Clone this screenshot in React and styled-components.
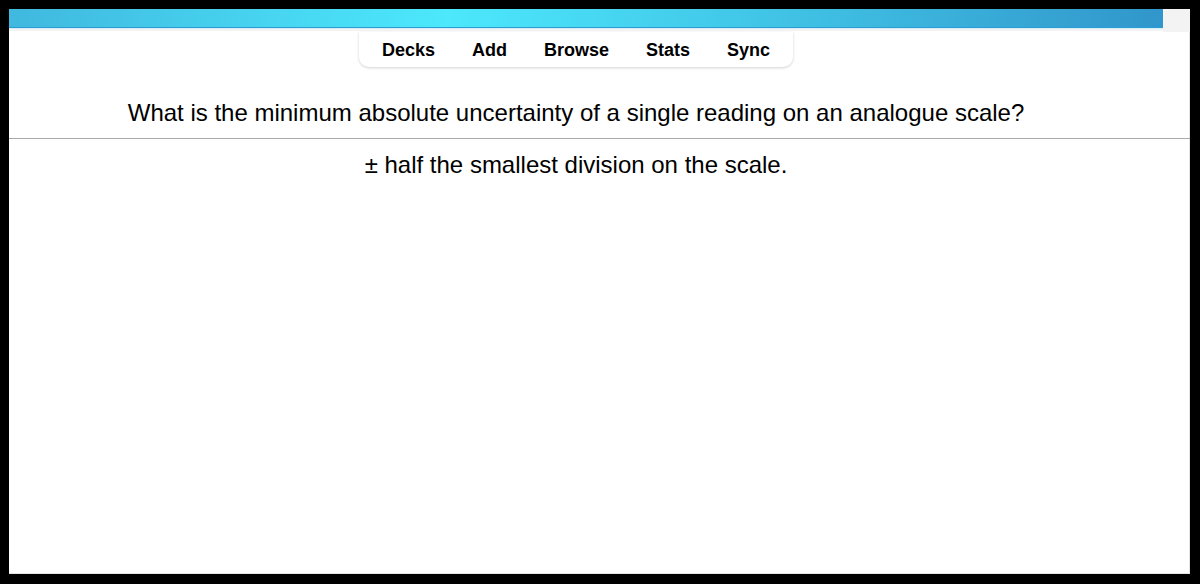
import React from "react";
import styled, { createGlobalStyle } from "styled-components";

const GlobalStyle = createGlobalStyle`
  html, body {
    margin: 0;
    padding: 0;
    background: #000;
  }
  body {
    font-family: "Liberation Sans", Arial, Helvetica, sans-serif;
  }
`;

const Frame = styled.div`
  box-sizing: border-box;
  height: 584px;
  padding: 9px 10px 10px 9px;
  background: #000;
`;

const Window = styled.div`
  height: 100%;
  background: #fff;
  display: flex;
  flex-direction: column;
  box-shadow: inset -1px -1px 0 #e4e4e4;
  overflow: hidden;
`;

// top coloured strip + the little grey corner next to it
const TopRow = styled.div`
  display: flex;
  align-items: flex-start;
`;

const ColorBar = styled.div`
  flex: 1;
  height: 18px;
  background: linear-gradient(
    to right,
    #40b8df 0%,
    #4ce8fc 38%,
    #3fbfe3 70%,
    #3196cb 100%
  );
  border-bottom: 1px solid #2b9dd2;
  box-shadow: 0 1px 0 #d6ecf6, 0 3px 0 #f3f3f3;
`;

const Corner = styled.div`
  width: 27px;
  height: 23px;
  background: #f3f3f3;
`;

const Column = styled.div`
  display: flex;
  flex-direction: column;
  align-items: center;
  padding-right: 47px;
`;

const Toolbar = styled.nav`
  display: flex;
  gap: 37px;
  padding: 8px 23px 6px;
  background: #fff;
  border-radius: 0 0 10px 10px;
  box-shadow: 0 1px 3px rgba(0, 0, 0, 0.18);
`;

const ToolLink = styled.a`
  font-size: 18px;
  font-weight: bold;
  color: #000;
  text-decoration: none;
  cursor: pointer;
`;

const Question = styled.div`
  margin-top: 32px;
  font-size: 24px;
  color: #000;
  text-align: center;
`;

const Divider = styled.hr`
  width: 100%;
  margin: 11px 0 12px;
  border: 0;
  border-top: 1px solid #a9a9a9;
`;

const Answer = styled.div`
  font-size: 24px;
  color: #000;
  text-align: center;
`;

const links = ["Decks", "Add", "Browse", "Stats", "Sync"];

const App = () => {
  return (
    <>
      <GlobalStyle />
      <Frame>
        <Window>
          <TopRow>
            <ColorBar />
            <Corner />
          </TopRow>
          <Column>
            <Toolbar>
              {links.map((name) => (
                <ToolLink key={name}>{name}</ToolLink>
              ))}
            </Toolbar>
            <Question>
              What is the minimum absolute uncertainty of a single reading on
              an analogue scale?
            </Question>
          </Column>
          <Divider />
          <Column>
            <Answer>± half the smallest division on the scale.</Answer>
          </Column>
        </Window>
      </Frame>
    </>
  );
};

export default App;
